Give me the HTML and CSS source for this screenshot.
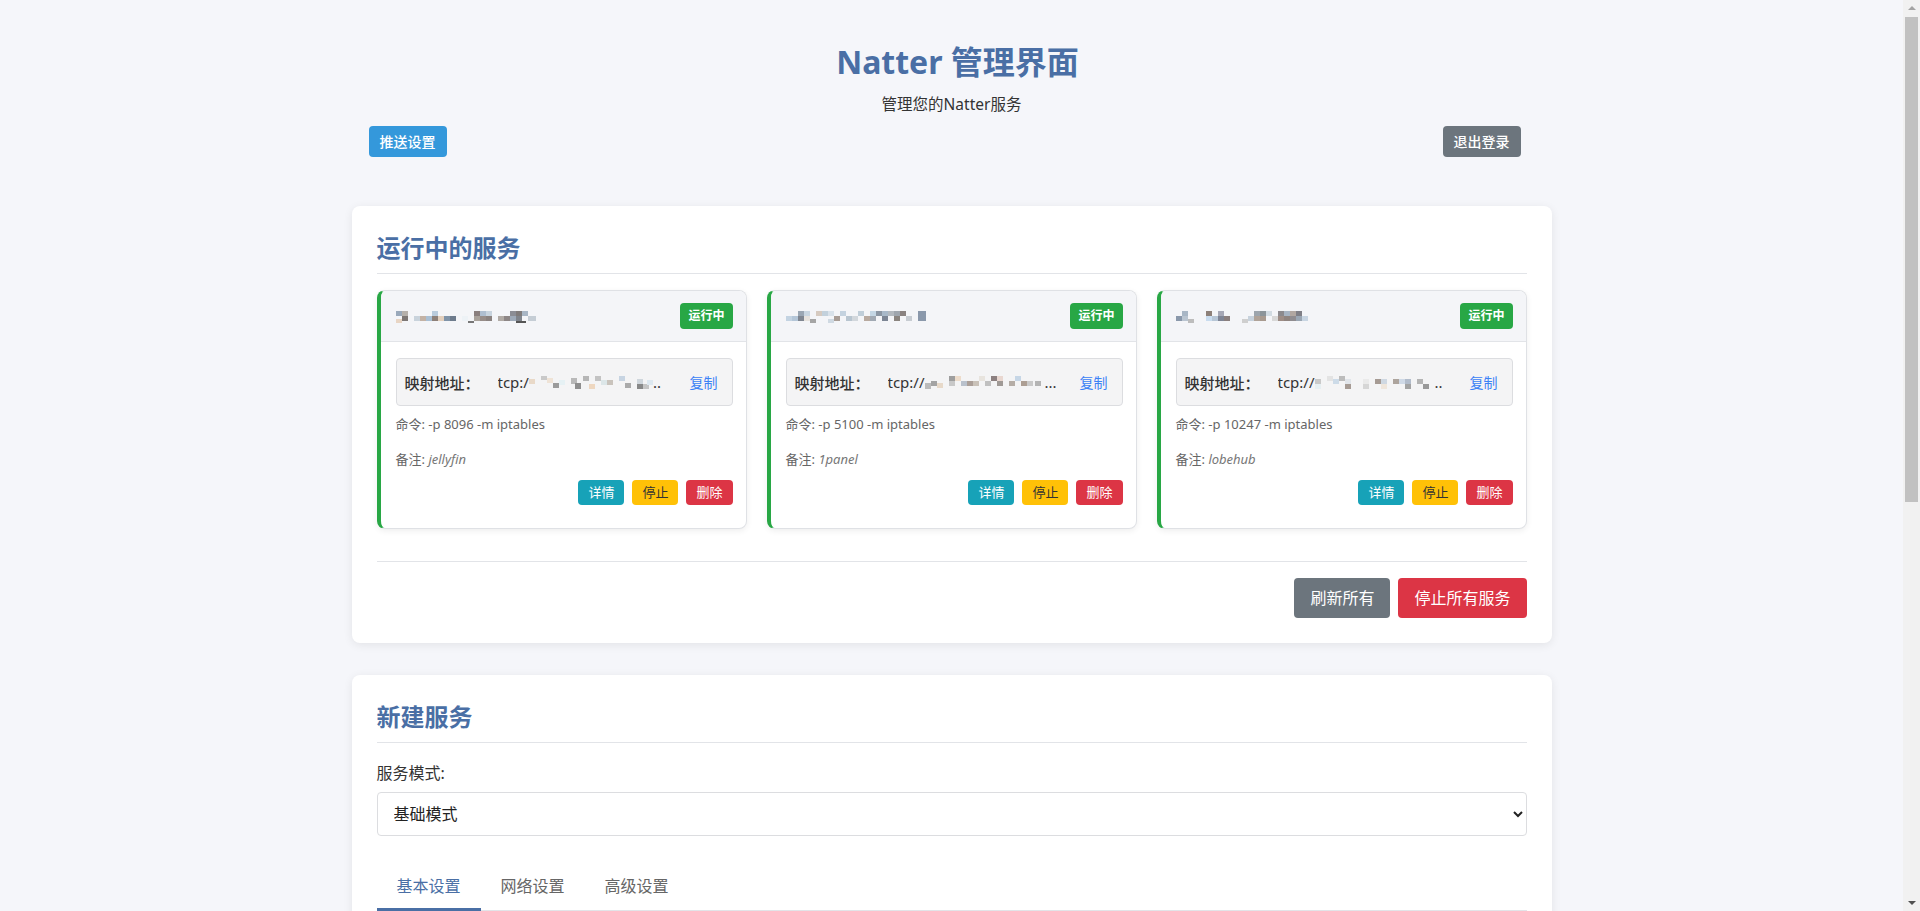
FILE: index.html
```html
<!DOCTYPE html>
<html lang="zh-CN">
<head>
<meta charset="utf-8">
<title>Natter 管理界面</title>
<link rel="stylesheet" href="styles.css">
</head>
<body>
<div class="page">
  <header class="header">
    <h1 class="title">Natter 管理界面</h1>
    <p class="subtitle">管理您的Natter服务</p>
    <div class="header-actions">
      <button class="btn btn-header btn-blue">推送设置</button>
      <button class="btn btn-header btn-gray">退出登录</button>
    </div>
  </header>

  <section class="panel">
    <h2 class="panel-title">运行中的服务</h2>
    <div class="service-grid">
      <div class="service-card">
        <div class="service-head">
          <svg class="mosaic" width="144" height="16" viewBox="0 0 144 16"><rect x="0" y="3" width="6" height="5" fill="#9aa9bb"/><rect x="6" y="3" width="6" height="5" fill="#b5b0ab"/><rect x="6" y="8" width="6" height="5" fill="#7d7775"/><rect x="0" y="11" width="6" height="4" fill="#e8d5c4"/><rect x="18" y="8" width="6" height="5" fill="#c9d3dc"/><rect x="24" y="8" width="6" height="5" fill="#c3b2a5"/><rect x="36" y="3" width="6" height="5" fill="#b9cbdc"/><rect x="30" y="8" width="6" height="5" fill="#a9bfd4"/><rect x="36" y="8" width="6" height="5" fill="#8d8079"/><rect x="42" y="8" width="6" height="5" fill="#e2cfbd"/><rect x="48" y="8" width="6" height="5" fill="#7f93a8"/><rect x="54" y="8" width="6" height="5" fill="#6d7b8c"/><rect x="66" y="8" width="6" height="5" fill="#edf2f6"/><rect x="78" y="3" width="6" height="5" fill="#8a7f7e"/><rect x="84" y="3" width="6" height="5" fill="#aebed0"/><rect x="90" y="3" width="6" height="5" fill="#c8d4df"/><rect x="78" y="8" width="6" height="5" fill="#a9a29b"/><rect x="84" y="8" width="6" height="5" fill="#978d89"/><rect x="90" y="8" width="6" height="5" fill="#8a8280"/><rect x="102" y="8" width="6" height="5" fill="#b1aba6"/><rect x="108" y="8" width="6" height="5" fill="#8d8686"/><rect x="114" y="3" width="6" height="5" fill="#8b8d95"/><rect x="120" y="3" width="6" height="5" fill="#7f7b7b"/><rect x="126" y="3" width="6" height="5" fill="#a8b6c5"/><rect x="114" y="8" width="6" height="5" fill="#9da9b8"/><rect x="120" y="8" width="6" height="5" fill="#7f848c"/><rect x="132" y="8" width="8" height="5" fill="#c5cdd5"/><rect x="72" y="13" width="6" height="2" fill="#777"/><rect x="120" y="13" width="10" height="2" fill="#555"/></svg>
          <span class="badge">运行中</span>
        </div>
        <div class="service-body">
          <div class="mapping">
            <span class="mapping-label">映射地址：</span>
            <span class="mapping-value">tcp:/<svg class="mosaic-inline" width="124" height="16" viewBox="0 0 124 16"><rect x="0" y="5" width="6" height="5" fill="#e9d9c8"/><rect x="12" y="2" width="6" height="4" fill="#c9c9c9"/><rect x="18" y="4" width="6" height="5" fill="#efe3d6"/><rect x="24" y="9" width="6" height="5" fill="#9b9b9b"/><rect x="30" y="6" width="6" height="5" fill="#e6f1f4"/><rect x="42" y="4" width="6" height="6" fill="#b9b9b9"/><rect x="46" y="9" width="6" height="6" fill="#8e8e8e"/><rect x="54" y="2" width="6" height="5" fill="#b6b6b6"/><rect x="60" y="10" width="6" height="5" fill="#eed7c0"/><rect x="66" y="2" width="6" height="5" fill="#c3c3c3"/><rect x="72" y="6" width="6" height="5" fill="#dce6e8"/><rect x="78" y="6" width="6" height="5" fill="#c9c3bc"/><rect x="90" y="2" width="6" height="5" fill="#c7d4e2"/><rect x="96" y="9" width="6" height="5" fill="#aaaaaa"/><rect x="108" y="5" width="6" height="5" fill="#cfd6dc"/><rect x="108" y="10" width="6" height="5" fill="#888"/><rect x="114" y="10" width="6" height="5" fill="#c5c5c5"/><rect x="118" y="6" width="6" height="5" fill="#dde8f0"/></svg>..</span>
            <button class="copy-btn">复制</button>
          </div>
          <p class="meta">命令: -p 8096 -m iptables</p>
          <p class="meta note">备注: <em>jellyfin</em></p>
          <div class="service-actions">
            <button class="btn btn-xs btn-teal">详情</button>
            <button class="btn btn-xs btn-yellow">停止</button>
            <button class="btn btn-xs btn-red">删除</button>
          </div>
        </div>
      </div>

      <div class="service-card">
        <div class="service-head">
          <svg class="mosaic" width="144" height="16" viewBox="0 0 144 16"><rect x="0" y="8" width="6" height="5" fill="#c3d3e2"/><rect x="6" y="8" width="6" height="5" fill="#b4c6d8"/><rect x="12" y="3" width="6" height="5" fill="#9aa6b3"/><rect x="12" y="8" width="6" height="5" fill="#7f8691"/><rect x="18" y="3" width="6" height="5" fill="#c9d6e1"/><rect x="18" y="8" width="6" height="5" fill="#e6e2dd"/><rect x="30" y="3" width="6" height="5" fill="#d6cac0"/><rect x="36" y="3" width="6" height="5" fill="#c3d1dc"/><rect x="42" y="3" width="6" height="5" fill="#d9e2ea"/><rect x="48" y="8" width="6" height="5" fill="#a89d96"/><rect x="54" y="3" width="6" height="5" fill="#c4d2df"/><rect x="60" y="8" width="6" height="5" fill="#b8c5d0"/><rect x="66" y="8" width="6" height="5" fill="#d2d7dc"/><rect x="72" y="3" width="6" height="5" fill="#c0ced9"/><rect x="78" y="8" width="6" height="5" fill="#b8aaa0"/><rect x="84" y="3" width="6" height="5" fill="#c4d6e4"/><rect x="90" y="3" width="6" height="5" fill="#8b96a3"/><rect x="96" y="3" width="6" height="5" fill="#a8b8c8"/><rect x="102" y="3" width="6" height="5" fill="#b3b9bf"/><rect x="108" y="3" width="6" height="5" fill="#9fa6ae"/><rect x="114" y="3" width="6" height="5" fill="#8a8280"/><rect x="84" y="8" width="6" height="5" fill="#a1a9b3"/><rect x="96" y="8" width="6" height="5" fill="#7c8594"/><rect x="108" y="8" width="6" height="5" fill="#8a847f"/><rect x="120" y="8" width="6" height="5" fill="#c7ccd2"/><rect x="132" y="3" width="8" height="10" fill="#8a98ab"/><rect x="24" y="11" width="6" height="4" fill="#a5a5a5"/><rect x="42" y="11" width="6" height="4" fill="#cfd9e2"/></svg>
          <span class="badge">运行中</span>
        </div>
        <div class="service-body">
          <div class="mapping">
            <span class="mapping-label">映射地址：</span>
            <span class="mapping-value">tcp:// <svg class="mosaic-inline" width="120" height="16" viewBox="0 0 120 16"><rect x="0" y="9" width="6" height="6" fill="#bbb"/><rect x="6" y="7" width="6" height="5" fill="#a3a3a3"/><rect x="12" y="9" width="6" height="5" fill="#e7d9c9"/><rect x="24" y="2" width="6" height="5" fill="#9e9e9e"/><rect x="24" y="7" width="6" height="5" fill="#c8c8c8"/><rect x="30" y="2" width="6" height="5" fill="#eddccb"/><rect x="36" y="7" width="6" height="5" fill="#b9c1cc"/><rect x="42" y="7" width="6" height="5" fill="#ab9f98"/><rect x="48" y="7" width="6" height="5" fill="#c9c1b8"/><rect x="54" y="2" width="6" height="5" fill="#e8e4de"/><rect x="60" y="7" width="6" height="5" fill="#c0c0c0"/><rect x="66" y="2" width="6" height="5" fill="#8c8080"/><rect x="72" y="2" width="6" height="5" fill="#e9d7d0"/><rect x="72" y="7" width="6" height="5" fill="#a09a96"/><rect x="84" y="7" width="6" height="5" fill="#b5ada6"/><rect x="90" y="2" width="6" height="5" fill="#c6d6e6"/><rect x="96" y="7" width="6" height="5" fill="#ac9e93"/><rect x="102" y="7" width="6" height="5" fill="#c9c9c9"/><rect x="110" y="7" width="6" height="5" fill="#b4b4b4"/></svg>...</span>
            <button class="copy-btn">复制</button>
          </div>
          <p class="meta">命令: -p 5100 -m iptables</p>
          <p class="meta note">备注: <em>1panel</em></p>
          <div class="service-actions">
            <button class="btn btn-xs btn-teal">详情</button>
            <button class="btn btn-xs btn-yellow">停止</button>
            <button class="btn btn-xs btn-red">删除</button>
          </div>
        </div>
      </div>

      <div class="service-card">
        <div class="service-head">
          <svg class="mosaic" width="144" height="16" viewBox="0 0 144 16"><rect x="0" y="8" width="6" height="5" fill="#8a98ab"/><rect x="6" y="3" width="6" height="5" fill="#a8b6c5"/><rect x="6" y="8" width="6" height="5" fill="#b9c4d0"/><rect x="12" y="11" width="6" height="4" fill="#bdbdbd"/><rect x="30" y="3" width="6" height="5" fill="#8d8079"/><rect x="30" y="8" width="6" height="5" fill="#c9dcef"/><rect x="36" y="8" width="6" height="5" fill="#b7c6d6"/><rect x="42" y="3" width="6" height="5" fill="#a6a8b6"/><rect x="42" y="8" width="6" height="5" fill="#7f8595"/><rect x="48" y="8" width="6" height="5" fill="#8a7f7e"/><rect x="72" y="8" width="6" height="5" fill="#c7d2dd"/><rect x="78" y="3" width="6" height="5" fill="#9da5ad"/><rect x="78" y="8" width="6" height="5" fill="#b0a399"/><rect x="84" y="3" width="6" height="5" fill="#8c9499"/><rect x="84" y="8" width="6" height="5" fill="#a89a8f"/><rect x="90" y="3" width="6" height="5" fill="#d2dbe2"/><rect x="96" y="8" width="6" height="5" fill="#d8d8d8"/><rect x="102" y="3" width="6" height="5" fill="#8c8a8e"/><rect x="108" y="3" width="6" height="5" fill="#a7b4c3"/><rect x="102" y="8" width="6" height="5" fill="#9e8d86"/><rect x="108" y="8" width="6" height="5" fill="#8f8480"/><rect x="114" y="3" width="6" height="5" fill="#b1a7a1"/><rect x="120" y="3" width="6" height="5" fill="#7f7f86"/><rect x="114" y="8" width="6" height="5" fill="#8f8c90"/><rect x="120" y="8" width="6" height="5" fill="#9aa6b3"/><rect x="126" y="8" width="6" height="5" fill="#c8d5e2"/><rect x="66" y="11" width="6" height="4" fill="#cfcfcf"/></svg>
          <span class="badge">运行中</span>
        </div>
        <div class="service-body">
          <div class="mapping">
            <span class="mapping-label">映射地址：</span>
            <span class="mapping-value">tcp://<svg class="mosaic-inline" width="120" height="16" viewBox="0 0 120 16"><rect x="0" y="5" width="6" height="5" fill="#c9c9c9"/><rect x="0" y="10" width="6" height="5" fill="#e6eff2"/><rect x="12" y="2" width="6" height="5" fill="#e3e3e3"/><rect x="18" y="5" width="6" height="5" fill="#cddbe8"/><rect x="24" y="2" width="6" height="5" fill="#bcbcbc"/><rect x="30" y="5" width="6" height="5" fill="#e1e5ea"/><rect x="30" y="10" width="6" height="5" fill="#a69b94"/><rect x="48" y="5" width="6" height="5" fill="#eaeaea"/><rect x="48" y="10" width="6" height="5" fill="#d6d6d6"/><rect x="60" y="5" width="6" height="5" fill="#a69b94"/><rect x="66" y="5" width="6" height="5" fill="#cfd8e2"/><rect x="66" y="10" width="6" height="5" fill="#efe6dc"/><rect x="78" y="5" width="6" height="5" fill="#ada49d"/><rect x="84" y="5" width="6" height="5" fill="#cfd9e6"/><rect x="90" y="5" width="6" height="5" fill="#b2bccb"/><rect x="90" y="10" width="6" height="5" fill="#a3a3a3"/><rect x="102" y="5" width="6" height="5" fill="#b4b4b4"/><rect x="108" y="10" width="6" height="5" fill="#999"/></svg>..</span>
            <button class="copy-btn">复制</button>
          </div>
          <p class="meta">命令: -p 10247 -m iptables</p>
          <p class="meta note">备注: <em>lobehub</em></p>
          <div class="service-actions">
            <button class="btn btn-xs btn-teal">详情</button>
            <button class="btn btn-xs btn-yellow">停止</button>
            <button class="btn btn-xs btn-red">删除</button>
          </div>
        </div>
      </div>
    </div>

    <div class="panel-actions">
      <button class="btn btn-md btn-gray">刷新所有</button>
      <button class="btn btn-md btn-red">停止所有服务</button>
    </div>
  </section>

  <section class="panel">
    <h2 class="panel-title">新建服务</h2>
    <div class="form-group">
      <label class="form-label" for="mode">服务模式:</label>
      <select id="mode" class="form-select">
        <option>基础模式</option>
        <option>高级模式</option>
      </select>
    </div>
    <div class="tabs">
      <span class="tab active">基本设置</span>
      <span class="tab">网络设置</span>
      <span class="tab">高级设置</span>
    </div>
    <div class="tab-content">
      <div class="form-group">
        <label class="form-label" for="port">本地端口:</label>
        <input id="port" class="form-input" type="text" placeholder="例如: 8080">
      </div>
      <div class="form-group">
        <label class="form-label" for="target">目标地址:</label>
        <input id="target" class="form-input" type="text" placeholder="例如: 127.0.0.1">
      </div>
      <div class="form-group">
        <label class="form-label" for="method">转发方式:</label>
        <select id="method" class="form-select">
          <option>iptables</option>
          <option>socket</option>
        </select>
      </div>
      <div class="form-group">
        <label class="form-label" for="remark">备注:</label>
        <input id="remark" class="form-input" type="text" placeholder="服务备注">
      </div>
      <div class="form-group">
        <label class="form-label" for="extra">额外参数:</label>
        <input id="extra" class="form-input" type="text" placeholder="其他命令行参数">
      </div>
      <div class="panel-actions plain">
        <button class="btn btn-md btn-blue">创建服务</button>
      </div>
    </div>
  </section>
</div>

<div class="scrollbar" aria-hidden="true">
  <span class="scroll-arrow up"></span>
  <span class="scroll-thumb"></span>
  <span class="scroll-arrow down"></span>
</div>
</body>
</html>
```

FILE: styles.css
```css
* { box-sizing: border-box; }

html, body {
  margin: 0;
  padding: 0;
}

body {
  background: #f5f6fa;
  color: #333;
  font-family: "Noto Sans", "Noto Sans CJK SC", sans-serif;
  font-size: 16px;
  padding-right: 17px;
}

/* window scrollbar as seen in the screenshot */
.scrollbar {
  position: fixed;
  top: 0;
  right: 0;
  bottom: 0;
  width: 17px;
  background: #f1f1f1;
  display: flex;
  flex-direction: column;
  align-items: center;
}

.scroll-arrow {
  flex: none;
  width: 0;
  height: 0;
  border-left: 4px solid transparent;
  border-right: 4px solid transparent;
}

.scroll-arrow.up {
  margin: 6px 0 7px;
  border-bottom: 4px solid #a3a3a3;
}

.scroll-thumb {
  flex: none;
  width: 13px;
  height: 485px;
  background: #c1c1c1;
}

.scroll-arrow.down {
  margin-top: auto;
  margin-bottom: 6px;
  border-top: 4px solid #505050;
}

.page {
  width: 1200px;
  margin: 0 auto;
  padding: 0 0 40px;
}

.header {
  text-align: center;
  padding-top: 43px;
  margin-bottom: 49px;
}

.title {
  margin: 0 0 12px;
  padding-left: 12px;
  font-size: 32px;
  line-height: 38px;
  font-weight: 700;
  color: #4a6fa5;
}

.subtitle {
  margin: 0 0 11px;
  font-size: 15.5px;
  line-height: 22px;
  color: #333;
}

.header-actions {
  display: flex;
  justify-content: space-between;
  padding: 0 31px 0 17px;
}

.btn {
  border: none;
  border-radius: 4px;
  color: #fff;
  font-family: "Noto Sans", "Noto Sans CJK SC", sans-serif;
  cursor: pointer;
}

.btn-header {
  font-size: 14px;
  font-weight: 500;
  line-height: 19px;
  padding: 6px 11px;
  height: 31px;
  width: 78px;
}

.btn-blue { background: #3498db; }
.btn-gray { background: #6c757d; }
.btn-red { background: #dc3545; }
.btn-teal { background: #17a2b8; }
.btn-yellow { background: #ffc107; color: #333; }

.panel {
  background: #fff;
  border-radius: 8px;
  box-shadow: 0 2px 10px rgba(0, 0, 0, 0.08);
  padding: 25px 25px 25px;
  margin-bottom: 32px;
}

.panel-title {
  margin: 0;
  font-size: 24px;
  line-height: 34px;
  font-weight: 700;
  color: #4a6fa5;
  padding-bottom: 8px;
  border-bottom: 1px solid #e2e4e8;
}

.service-grid {
  display: grid;
  grid-template-columns: repeat(3, 1fr);
  gap: 20px;
  margin-top: 16px;
}

.service-card {
  border: 1px solid #dfe1e5;
  border-left: 4px solid #28a745;
  border-radius: 8px;
  background: #fff;
  box-shadow: 0 2px 6px rgba(0, 0, 0, 0.07);
  overflow: hidden;
}

.service-head {
  display: flex;
  align-items: center;
  justify-content: space-between;
  background: #f4f5f8;
  padding: 12px 13px 12px 15px;
  border-bottom: 1px solid #e2e4e8;
}

.mosaic { display: block; }

.badge {
  background: #28a745;
  color: #fff;
  font-size: 12px;
  font-weight: 700;
  line-height: 18px;
  padding: 4px 8px;
  border-radius: 4px;
}

.service-body {
  padding: 16px 13px 23px 15px;
}

.mapping {
  display: flex;
  align-items: center;
  height: 48px;
  background: #f4f4f5;
  border: 1px solid #dcdde0;
  border-radius: 4px;
  padding: 0 0 0 8px;
}

.mapping-label {
  flex: none;
  width: 93px;
  font-size: 15px;
  font-weight: 500;
  color: #333;
}

.mapping-value {
  flex: 1;
  min-width: 0;
  display: flex;
  align-items: center;
  white-space: nowrap;
  overflow: hidden;
  font-size: 15px;
  color: #333;
}

.mosaic-inline {
  display: block;
  flex: none;
}

.copy-btn {
  flex: none;
  background: none;
  border: none;
  color: #3b82f6;
  font-size: 14px;
  font-family: "Noto Sans", "Noto Sans CJK SC", sans-serif;
  padding: 0 14px;
  cursor: pointer;
}

.meta {
  margin: 8px 0 0;
  font-size: 13px;
  line-height: 20px;
  color: #666;
}

.meta.note {
  margin-top: 15px;
}

.meta em {
  color: #777;
}

.service-actions {
  display: flex;
  justify-content: flex-end;
  gap: 8px;
  margin-top: 11px;
}

.btn-xs {
  font-size: 13px;
  line-height: 17px;
  padding: 4px 10px;
  height: 25px;
}

.panel-actions {
  display: flex;
  justify-content: flex-end;
  gap: 8px;
  margin-top: 32px;
  padding-top: 16px;
  border-top: 1px solid #e2e4e8;
}

.panel-actions.plain {
  border-top: none;
  margin-top: 12px;
}

.btn-md {
  font-size: 16px;
  line-height: 24px;
  padding: 8px 16px;
  height: 40px;
}

.form-group {
  margin-top: 18px;
}

.form-label {
  display: block;
  font-size: 16px;
  line-height: 24px;
  margin-bottom: 7px;
  color: #333;
}

.form-select,
.form-input {
  display: block;
  width: 100%;
  height: 44px;
  padding: 0 12px;
  font-size: 16px;
  font-family: "Noto Sans", "Noto Sans CJK SC", sans-serif;
  color: #222;
  background: #fff;
  border: 1px solid #dcdde0;
  border-radius: 4px;
}

.tabs {
  display: flex;
  margin-top: 28px;
  border-bottom: 1px solid #e2e4e8;
}

.tab {
  padding: 10px 20px;
  font-size: 16px;
  line-height: 24px;
  color: #666;
  border-bottom: 3px solid transparent;
  margin-bottom: -1px;
  cursor: pointer;
}

.tab.active {
  color: #4a6fa5;
  border-bottom-color: #4a6fa5;
}

.tab-content {
  padding-top: 4px;
}
```
